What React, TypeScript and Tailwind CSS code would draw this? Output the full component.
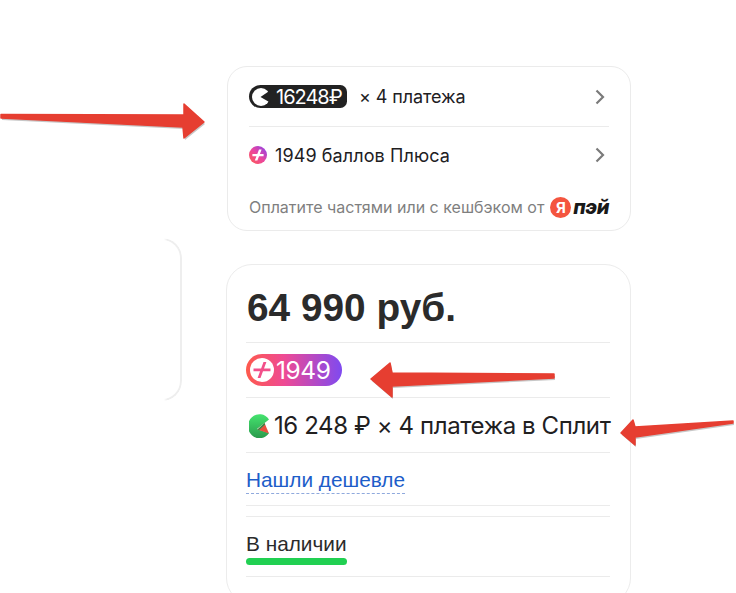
const ysans = { fontFamily: 'Inter, "Noto Sans", sans-serif' };

function Chevron() {
  return (
    <svg width="12" height="18" viewBox="0 0 12 18" fill="none" className="shrink-0 -translate-x-[3px]">
      <path d="M2.5 2.5 L9 9 L2.5 15.5" stroke="#7a7a7a" strokeWidth="2.2" />
    </svg>
  );
}

function PlusIcon({ size = 18 }: { size?: number }) {
  return (
    <svg width={size} height={size} viewBox="0 0 18 18" className="shrink-0">
      <defs>
        <linearGradient id="pg" x1="0" y1="1" x2="1" y2="0">
          <stop offset="0" stopColor="#ff5c4d" />
          <stop offset="0.5" stopColor="#eb469f" />
          <stop offset="1" stopColor="#8341ef" />
        </linearGradient>
      </defs>
      <circle cx="9" cy="9" r="9" fill="url(#pg)" />
      <path d="M3.4 8H14.6V10.2H3.4Z M10 3.4H12.6L8.4 14.6H5.8Z" fill="#fff" />
    </svg>
  );
}

function Pac({ dark }: { dark?: boolean }) {
  if (dark) {
    return (
      <svg width="20" height="20" viewBox="0 0 20 20" className="shrink-0">
        <circle cx="10" cy="10" r="9" fill="#fff" />
        <path d="M19 3.5 L9.5 10 L19 15.5 L21 10Z" fill="#222" />
        <path d="M11.5 10 L17 6.8 V13.6Z" fill="#222" />
      </svg>
    );
  }
  return (
    <svg width="22" height="24" viewBox="0 0 22 24" className="shrink-0">
      <defs>
        <linearGradient id="gg" x1="0" y1="0" x2="0" y2="1">
          <stop offset="0" stopColor="#45e46f" />
          <stop offset="1" stopColor="#2a9a4c" />
        </linearGradient>
      </defs>
      <path d="M20 5.5 A11.5 12 0 1 0 20 19 L8 15Z" fill="url(#gg)" />
      <path d="M8.5 15.5 L15.5 9 L20 19.5 Z" fill="#e8503f" />
      <path d="M8.5 15.5 L15.5 9 L16.2 10.5 L10 16Z" fill="#2f8a4c" />
    </svg>
  );
}

function Arrow({ className, d, w, h }: { className: string; d: string; w: number; h: number }) {
  return (
    <svg width={w} height={h} viewBox={`0 0 ${w} ${h}`} className={`absolute ${className}`}>
      <path d={d} fill="#b9b9b9" transform="translate(1 2)" opacity="0.8" />
      <path d={d} fill="#e63e31" stroke="#e63e31" strokeWidth="1.5" strokeLinejoin="round" />
    </svg>
  );
}

function Rule() {
  return <div className="h-px bg-[#ebebeb]" />;
}

export default function App() {
  return (
    <div className="relative w-[736px] h-[593px] overflow-hidden bg-white pt-[66px]">
      <section
        style={ysans}
        className="ml-[227px] w-[404px] h-[165px] rounded-[20px] border border-[#ebebeb] px-[21px] text-[#21201f]"
      >
        <div className="flex h-[59px] items-center justify-between">
          <div className="flex items-center">
            <span className="flex h-[23px] w-[98px] items-center gap-[5px] rounded-[7px] rounded-l-[12px] bg-[#222] pl-[2px] text-[20px] tracking-[-1px] text-white">
              <Pac dark />
              16248₽
            </span>
            <span className="ml-[12px] text-[18px] tracking-[-0.1px]">× 4 платежа</span>
          </div>
          <Chevron />
        </div>
        <Rule />
        <div className="flex h-[56px] items-center justify-between">
          <div className="flex items-center gap-[8px] text-[18px] tracking-[0.1px]">
            <PlusIcon />
            1949 баллов Плюса
          </div>
          <Chevron />
        </div>
        <div className="mt-[12px] flex items-center text-[16px] text-[#7f7f7f]">
          Оплатите частями или с кешбэком от
          <span className="ml-[6px] flex h-[21px] w-[21px] items-center justify-center rounded-full bg-[#f4553f] text-[15px] font-bold leading-none text-white">
            Я
          </span>
          <span className="ml-[2px] text-[20px] font-extrabold italic leading-none tracking-[-0.5px] text-[#191919]">пэй</span>
        </div>
      </section>

      <div className="flex items-start" style={{ fontFamily: '"Liberation Sans", Arial, sans-serif' }}>
        <div className="mt-[7px] h-[163px] w-[182px] rounded-r-[20px] border-2 border-l-0 border-[#eeeeee] [mask-image:linear-gradient(to_right,transparent_164px,black_167px)]" />
        <section className="ml-[44px] mt-[33px] h-[340px] w-[405px] shrink-0 rounded-[26px] border border-[#ececec] pl-[19px] pr-[20px] text-[#2b2b2b]">
          <div className="flex h-[77px] items-center pl-[1px] text-[38.8px] font-bold leading-none">
            <span className="pt-[9px]">64 990 руб.</span>
          </div>
          <Rule />
          <div className="flex h-[54px] items-center">
            <span
              style={ysans}
              className="flex h-[32px] w-[96px] items-center gap-[2px] rounded-full bg-[linear-gradient(90deg,#fe5a4c_0%,#ee4a94_40%,#7f4af0_100%)] pl-[4px] text-[24.5px] tracking-[-0.4px] text-white"
            >
              <svg width="24" height="24" viewBox="0 0 24 24" className="shrink-0">
                <circle cx="12" cy="12" r="12" fill="#fff" />
                <path d="M3.5 10.6H20.5V13.2H3.5Z M13.5 4H16.4L10.5 20H7.6Z" fill="#f2508a" />
              </svg>
              1949
            </span>
          </div>
          <Rule />
          <div style={ysans} className="flex h-[54px] items-center gap-[3px] whitespace-nowrap pl-[3px] pt-[1px] text-[24px] tracking-[-0.4px] text-[#21201f]">
            <Pac />
            <span>16 248 ₽ × 4 платежа в Сплит</span>
          </div>
          <Rule />
          <div className="flex h-[52px] items-center">
            <span className="border-b border-dashed border-[#8fa9dd] pb-[1px] pt-[3px] text-[20.8px] leading-[24px] text-[#1d5dc9]">
              Нашли дешевле
            </span>
          </div>
          <Rule />
          <div className="h-[10px]" />
          <Rule />
          <div className="flex h-[59px] flex-col justify-center pt-[4px]">
            <span className="text-[20.8px] leading-[22px]">В наличии</span>
            <span className="mt-[3px] h-[7px] w-[101px] rounded-full bg-[#21d052]" />
          </div>
          <Rule />
        </section>
      </div>

      <Arrow
        className="left-0 top-[100px]"
        w={210}
        h={42}
        d="M1 14.5 L184 15 L184 4 L204 22 L184 38 L183 27 L1 18Z"
      />
      <Arrow
        className="left-[368px] top-[358px]"
        w={190}
        h={42}
        d="M3 21 L22 5 L24 15 L186 16 L186 20 L24 28 L24 39Z"
      />
      <Arrow
        className="left-[618px] top-[416px]"
        w={118}
        h={36}
        d="M3 17 L15 4 L17 11 L115 5 L115 7 L17 21 L17 29Z"
      />
    </div>
  );
}
